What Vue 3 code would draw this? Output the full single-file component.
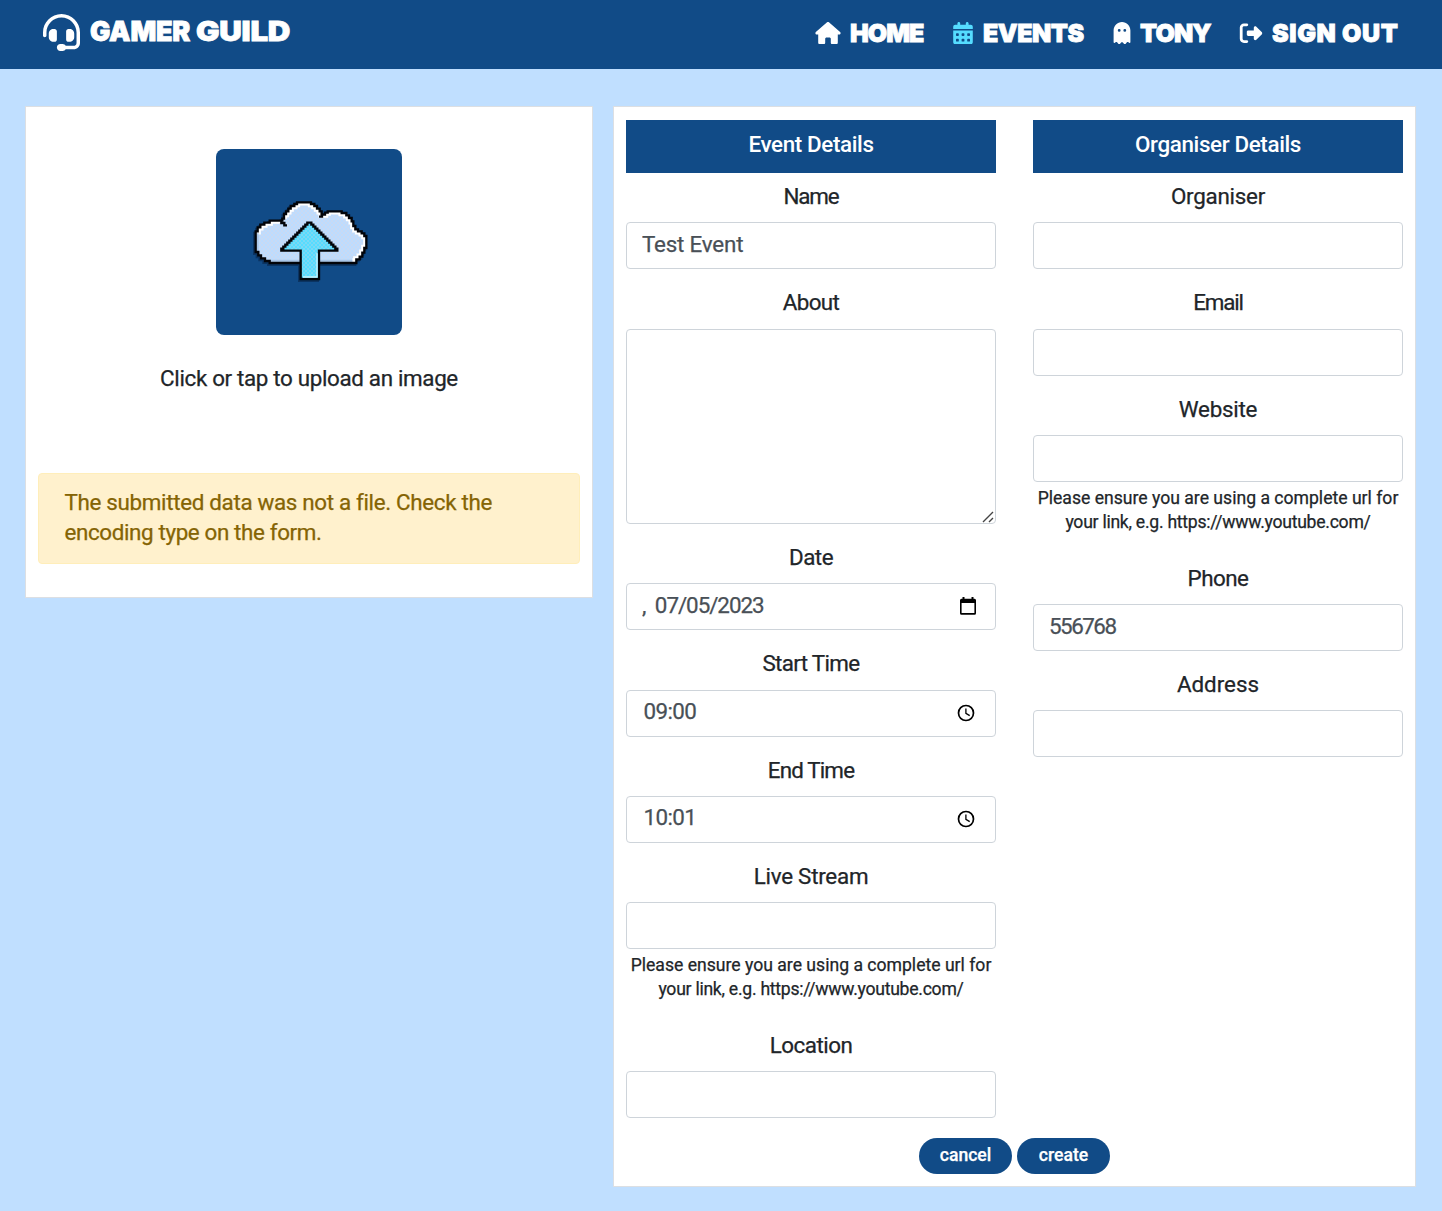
<script setup>
import { ref } from 'vue'

const help = ['Please ensure you are using a complete url for', 'your link, e.g. https://www.youtube.com/']

const columns = ref([
  {
    title: 'Event Details',
    fields: [
      { label: 'Name', value: 'Test Event', kind: 'text' },
      { label: 'About', value: '', kind: 'area' },
      { label: 'Date', value: ', 07/05/2023', kind: 'date' },
      { label: 'Start Time', value: '09:00', kind: 'time' },
      { label: 'End Time', value: '10:01', kind: 'time' },
      { label: 'Live Stream', value: '', kind: 'text', help },
      { label: 'Location', value: '', kind: 'text' }
    ]
  },
  {
    title: 'Organiser Details',
    fields: [
      { label: 'Organiser', value: '', kind: 'text' },
      { label: 'Email', value: '', kind: 'text' },
      { label: 'Website', value: '', kind: 'text', help },
      { label: 'Phone', value: '556768', kind: 'text' },
      { label: 'Address', value: '', kind: 'text' }
    ]
  }
])

const slug = (s) => 'l-' + s.toLowerCase().replace(' ', '-')

const dot = (x, y) => `M${x} ${y}h32a16 16 0 0 1 16 16v32a16 16 0 0 1 -16 16h-32a16 16 0 0 1 -16 -16v-32a16 16 0 0 1 16 -16z`
const calendarPath =
  'M128 0c17.7 0 32 14.3 32 32V64H288V32c0-17.7 14.3-32 32-32s32 14.3 32 32V64h48c26.5 0 48 21.5 48 48v48H0V112C0 85.5 21.5 64 48 64H96V32c0-17.7 14.3-32 32-32zM0 192H448V464c0 26.5-21.5 48-48 48H48c-26.5 0-48-21.5-48-48V192z' +
  [256, 384].map((y) => [80, 208, 336].map((x) => dot(x, y)).join('')).join('')

const nav = [
  {
    text: 'HOME', cls: 'home', box: '0 0 576 512',
    d: 'M575.8 255.5c0 18-15 32.1-32 32.1h-32l.7 160.2c0 2.7-.2 5.4-.5 8.1V472c0 22.1-17.9 40-40 40H456c-1.1 0-2.2 0-3.3-.1c-1.4 .1-2.8 .1-4.2 .1H416 392c-22.1 0-40-17.9-40-40V448 384c0-17.7-14.3-32-32-32H256c-17.7 0-32 14.3-32 32v64 24c0 22.1-17.9 40-40 40H160 128.1c-1.5 0-3-.1-4.5-.2c-1.2 .1-2.4 .2-3.6 .2H104c-22.1 0-40-17.9-40-40V360c0-.9 0-1.9 .1-2.8V287.6H32c-18 0-32-14-32-32.1c0-9 3-17 10-24L266.4 8c7-7 15-8 22-8s15 2 21 7L564.8 231.5c8 7 12 15 11 24z'
  },
  { text: 'EVENTS', cls: 'events', box: '0 0 448 512', d: calendarPath },
  {
    text: 'TONY', cls: 'tony', box: '0 0 384 512',
    d: 'M40.1 467.1l-11.2 9c-3.2 2.5-7.1 3.9-11.1 3.9C8 480 0 472 0 462.2V192C0 86 86 0 192 0S384 86 384 192V462.2c0 9.8-8 17.8-17.8 17.8c-4 0-7.9-1.4-11.1-3.9l-11.2-9c-13.4-10.7-32.8-9-44.1 3.9L269.3 506c-3.3 3.8-8.2 6-13.3 6s-9.9-2.2-13.3-6l-26.6-30.5c-12.7-14.6-35.4-14.6-48.2 0L141.3 506c-3.3 3.8-8.2 6-13.3 6s-9.9-2.2-13.3-6L84.2 471c-11.3-12.9-30.7-14.6-44.1-3.9zM160 192a32 32 0 1 0 -64 0 32 32 0 1 0 64 0zm96 32a32 32 0 1 0 0-64 32 32 0 1 0 0 64z'
  },
  {
    text: 'SIGN OUT', cls: 'out', box: '0 0 512 512',
    d: 'M377.9 105.9L500.7 228.7c7.2 7.2 11.3 17.1 11.3 27.3s-4.1 20.1-11.3 27.3L377.9 406.1c-6.4 6.4-15 9.9-24 9.9c-18.7 0-33.9-15.2-33.9-33.9l0-62.1-128 0c-17.7 0-32-14.3-32-32l0-64c0-17.7 14.3-32 32-32l128 0 0-62.1c0-18.7 15.2-33.9 33.9-33.9c9 0 17.6 3.6 24 9.9zM160 96L96 96c-17.7 0-32 14.3-32 32l0 256c0 17.7 14.3 32 32 32l64 0c17.7 0 32 14.3 32 32s-14.3 32-32 32l-64 0c-53 0-96-43-96-96L0 128C0 75 43 32 96 32l64 0c17.7 0 32 14.3 32 32s-14.3 32-32 32z'
  }
]

// Stepped outline of the cloud, split so the lit edge can be drawn on its own
const cloudLit = 'M32 136V124H38V112H46V104H58V98H74V92H104V98M117 86V72H123V64H130V56H137V48H148V42H156V37H198V42H208V48H216V56H224V64H230V74H240V68H248V64H290V69H304V76H312V84H320V94H325V108H331V118H339V124H350V130H358V138H364V174H358V188H352V200H344V208H334V214H322'
const cloudBody = 'M32 136V124H38V112H46V104H58V98H74V92H112V86H117V72H123V64H130V56H137V48H148V42H156V37H198V42H208V48H216V56H224V64H230V74H240V68H248V64H290V69H304V76H312V84H320V94H325V108H331V118H339V124H350V130H358V138H364V174H358V188H352V200H344V208H334V219H74V213H60V205H48V196H40V186H32Z'
const arrow = 'M193 98' + 'h6v6'.repeat(14) + 'H222V267H167V182H109' + 'v-6h6'.repeat(14) + 'Z'
</script>

<template>
  <div class="page">
    <header class="navbar">
      <div class="brand">
        <svg viewBox="0 0 512 512" width="37" height="37"><path fill="#fff" d="M256 48C141.1 48 48 141.1 48 256v40c0 13.3-10.7 24-24 24s-24-10.7-24-24V256C0 114.6 114.6 0 256 0S512 114.6 512 256V400.1c0 48.6-39.4 88-88.1 88L313.6 488c-8.3 14.3-23.8 24-41.6 24H240c-26.5 0-48-21.5-48-48s21.5-48 48-48h32c17.8 0 33.3 9.7 41.6 24l110.4 .1c22.1 0 40-17.9 40-40V256c0-114.9-93.1-208-208-208zM144 208h16c17.7 0 32 14.3 32 32V352c0 17.7-14.3 32-32 32H144c-35.3 0-64-28.7-64-64V272c0-35.3 28.7-64 64-64zm224 0c35.3 0 64 28.7 64 64v48c0 35.3-28.7 64-64 64H352c-17.7 0-32-14.3-32-32V240c0-17.7 14.3-32 32-32h16z" /></svg>
        <div class="wordmark">GAMER <span class="wide">GUILD</span></div>
      </div>
      <nav>
        <a v-for="n in nav" :key="n.text" :class="n.cls">
          <svg :viewBox="n.box"><path fill="currentColor" fill-rule="evenodd" :d="n.d" /></svg>
          <span>{{ n.text }}</span>
        </a>
      </nav>
    </header>

    <main>
      <section class="card upload">
        <div class="tile">
          <svg viewBox="0 0 390 300" width="130" height="100">
            <defs>
              <clipPath id="cloudClip"><path :d="cloudBody" /></clipPath>
              <pattern id="dither" width="12" height="12" patternUnits="userSpaceOnUse">
                <rect width="12" height="12" fill="#55dcff" />
                <rect width="6" height="6" fill="#7ad9f4" /><rect x="6" y="6" width="6" height="6" fill="#7ad9f4" />
              </pattern>
              <pattern id="ditherCloud" width="12" height="12" patternUnits="userSpaceOnUse">
                <rect width="12" height="12" fill="#bcdcff" />
                <rect width="6" height="6" fill="#c8daf4" /><rect x="6" y="6" width="6" height="6" fill="#c8daf4" />
              </pattern>
            </defs>
            <g transform="translate(-4 5)" fill="#08254a" opacity=".6">
              <path :d="cloudBody" stroke="#08254a" stroke-width="8" /><path :d="arrow" stroke="#08254a" stroke-width="8" />
            </g>
            <path :d="cloudBody" fill="url(#ditherCloud)" />
            <g clip-path="url(#cloudClip)" fill="none">
              <path :d="cloudLit" stroke="#fff" stroke-width="19" />
              <path d="M38 130V184M76 212H322" stroke="#a9c6e8" stroke-width="6" />
            </g>
            <path :d="cloudBody" fill="none" stroke="#020409" stroke-width="7" />
            <path d="M109 93V99H118V106H126" fill="none" stroke="#020409" stroke-width="7" />
            <path d="M231 70V80H222" fill="none" stroke="#020409" stroke-width="7" />
            <path :d="arrow" fill="url(#dither)" stroke="#020409" stroke-width="7" />
            <path d="M216 190V261H174" fill="none" stroke="#c5f3ff" stroke-width="4" />
          </svg>
        </div>
        <p class="caption">Click or tap to upload an image</p>
        <div class="alert">
          <div>The submitted data was not a file. Check the</div>
          <div class="tight">encoding type on the form.</div>
        </div>
      </section>

      <section class="card form">
        <div class="columns">
          <div v-for="c in columns" :key="c.title" class="column">
            <h2>{{ c.title }}</h2>
            <div v-for="f in c.fields" :key="f.label" class="field">
              <label><span :class="slug(f.label)">{{ f.label }}</span></label>
              <div class="control">
                <textarea v-if="f.kind === 'area'" v-model="f.value"></textarea>
                <input v-else v-model="f.value" type="text" :class="[f.kind, { digits: f.label === 'Phone' }]" />
                <svg v-if="f.kind === 'area'" class="grip" width="12" height="12" viewBox="0 0 12 12"><path d="M1 11L11 1M7 11L11 7" stroke="#444" stroke-width="1.4" /></svg>
                <svg v-if="f.kind === 'date'" class="ico-date" width="16" height="18" viewBox="0 0 16 18"><path fill-rule="evenodd" d="M2.5 0h2v1.7h7V0h2v1.7h1a1.5 1.5 0 0 1 1.5 1.5v13a1.5 1.5 0 0 1-1.5 1.5h-13A1.5 1.5 0 0 1 0 16.2V3.2a1.5 1.5 0 0 1 1.5-1.5h1zM1.6 6v10.100h12.800V6z" /></svg>
                <svg v-if="f.kind === 'time'" class="ico-time" width="18" height="18" viewBox="0 0 18 18"><circle cx="9" cy="9" r="7.5" fill="none" stroke="#000" stroke-width="1.7" /><path d="M8.9 4.5V9.3L12.7 11.6" fill="none" stroke="#000" stroke-width="1.3" /></svg>
              </div>
              <small v-if="f.help">{{ f.help[0] }}<br /><span class="link-hint">{{ f.help[1] }}</span></small>
            </div>
          </div>
        </div>
        <div class="actions">
          <button>cancel</button>
          <button>create</button>
        </div>
      </section>
    </main>
  </div>
</template>

<style>
body { background: #c0dfff; }
</style>

<style scoped>
* { box-sizing: border-box; }
.page { width: 1442px; min-height: 1211px; background: #c0dfff; color: #212529; font-family: Roboto, "Liberation Sans", sans-serif; font-size: 22.4px; -webkit-text-stroke: 0.25px currentColor; }
.navbar { height: 69px; background: #114b87; color: #fff; display: flex; justify-content: space-between; padding: 0 45px 0 43px; font-family: Inter, "Liberation Sans", sans-serif; font-weight: 900; -webkit-text-stroke: 0.8px #fff; }
.brand { display: flex; gap: 10px; padding-top: 14px; }
.wordmark { font-size: 27px; line-height: 35px; white-space: nowrap; letter-spacing: -0.2px; }
.wide { display: inline-block; margin-left: 1px; transform: scaleX(1.155); transform-origin: left; }
nav { display: flex; padding-top: 17px; }
nav a { display: flex; align-items: center; height: 32px; white-space: nowrap; }
nav span { font-size: 25px; line-height: 32px; }
nav svg { height: 22.4px; flex: none; }
.home { width: 138px; letter-spacing: -1px; }
.home svg { width: 26px; margin-right: 9px; }
.events { width: 160px; letter-spacing: -0.5px; }
.events svg { width: 20px; margin-right: 10px; color: #55dcff; }
.tony { width: 126px; letter-spacing: -0.9px; }
.tony svg { width: 18px; margin-right: 9px; }
.out { width: 158px; letter-spacing: 0.6px; }
.out svg { width: 24px; margin-right: 9px; }

main { display: flex; align-items: flex-start; gap: 20px; padding: 37px 26px 0 25px; }
.card { background: #fff; border: 1px solid #dcdfe3; }
.upload { width: 568px; height: 492px; padding: 42px 12px 0; display: flex; flex-direction: column; align-items: center; }
.tile { width: 186px; height: 186px; border-radius: 8px; background: #114b87; padding: 41px 0 0 29px; }
.tile svg { display: block; }
.caption { margin: 27px 0 0; line-height: 33px; white-space: nowrap; letter-spacing: -0.34px; }
.alert { width: 542px; height: 91px; margin-top: 78px; padding: 13px 25.5px; border: 1px solid #ffeeba; border-radius: 4px; background: #fff1cd; color: #856404; line-height: 30px; white-space: nowrap; letter-spacing: -0.33px; }
.tight { letter-spacing: -0.37px; }
.form { width: 803px; height: 1081px; padding: 13px 12px 0; }
.columns { display: flex; gap: 37px; height: 1018px; }
.column { width: 370px; }
h2 { margin: 0 0 6px; height: 53px; background: #114b87; color: #fff; font-size: 22.4px; font-weight: 500; line-height: 48px; text-align: center; letter-spacing: -0.36px; -webkit-text-stroke: 0; }
.field { margin-bottom: 16px; text-align: center; }
label { display: block; height: 35.4px; line-height: 34.6px; margin-bottom: 8px; }
.l-name, .l-email { letter-spacing: -1.2px; }
.l-about, .l-start-time { letter-spacing: -0.65px; }
.l-end-time { letter-spacing: -0.85px; }
.l-date, .l-location, .l-phone { letter-spacing: -0.5px; }
.l-live-stream, .l-organiser, .l-website { letter-spacing: -0.25px; }
.control { position: relative; }
input, textarea { display: block; width: 100%; height: 47px; border: 1px solid #ced4da; border-radius: 4px; background: #fff; color: #495057; font: inherit; letter-spacing: -0.2px; padding: 0 15px 3px; outline: none; }
input.date { letter-spacing: -1.05px; word-spacing: 5px; }
input.time { letter-spacing: -0.6px; padding: 0 16.5px 5px; }
input.digits { letter-spacing: -1.5px; }
textarea { height: 195px; resize: none; }
.grip { position: absolute; right: 2px; bottom: 1px; }
.ico-date { position: absolute; right: 20px; top: 14px; }
.ico-time { position: absolute; right: 21px; top: 14px; }
small { display: block; height: 62px; padding-top: 4px; font-size: 17.6px; line-height: 24px; white-space: nowrap; }
.link-hint { letter-spacing: -0.26px; }
.field:has(small) { margin-bottom: 16.4px; }
.actions { display: flex; justify-content: center; gap: 5px; }
button { width: 93px; height: 36px; border: 0; border-radius: 18px; padding: 0 0 2px; background: #114b87; color: #fff; font: 500 17.6px Roboto, sans-serif; }
</style>
